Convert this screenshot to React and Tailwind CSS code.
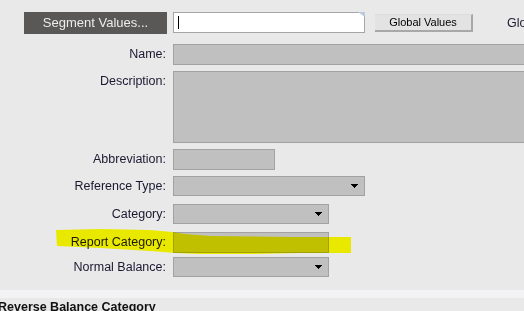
import React from "react";

function Arrow() {
  return (
    <svg width="7" height="4" viewBox="0 0 7 4" className="block">
      <rect x="0" y="0" width="7" height="1" fill="#000" />
      <rect x="1" y="1" width="5" height="1" fill="#000" />
      <rect x="2" y="2" width="3" height="1" fill="#000" />
      <rect x="3" y="3" width="1" height="1" fill="#000" />
    </svg>
  );
}

function Row({ label, mt, children, top }) {
  return (
    <div className={`flex ${top ? "items-start" : "items-center"} ${mt}`}>
      <div
        className={`w-[166px] shrink-0 text-right text-[12.5px] leading-[15px] text-[#1a1830] ${
          top ? "pt-[3px]" : ""
        }`}
      >
        {label}
      </div>
      <div className="ml-[7px] shrink-0">{children}</div>
    </div>
  );
}

function Field({ w, h, arrow }) {
  return (
    <div
      className={`${w} ${h} shrink-0 bg-[#c0c0c0] border border-[#a2a2a2] flex items-center justify-end pr-[6px]`}
    >
      {arrow ? <Arrow /> : null}
    </div>
  );
}

export default function App() {
  return (
    <div
      className="relative w-[524px] h-[311px] overflow-hidden bg-[#e9e9e9]"
      style={{ fontFamily: '"Liberation Sans", Arial, sans-serif' }}
    >
      {/* top row */}
      <div className="flex items-start pt-[12px]">
        <div className="shrink-0 ml-[24px] w-[143px] h-[22px] bg-[#5a5856] text-[#ececec] text-[13px] flex items-center justify-center">
          Segment Values...
        </div>
        <div className="relative shrink-0 ml-[6px] w-[192px] h-[21px] bg-white border border-[#a6a6a6]">
          <div className="absolute left-[4px] top-[3px] w-px h-[13px] bg-black" />
          <svg
            width="7"
            height="5"
            viewBox="0 0 7 5"
            className="absolute right-[-1px] top-[-1px]"
          >
            <polygon points="0,0 7,0 7,5" fill="#b9c9de" />
          </svg>
        </div>
        <div className="shrink-0 mt-[2px] ml-[10px] w-[98px] h-[18px] bg-[#e3e3e3] border-t border-t-[#dcdcdc] border-r-2 border-r-[#a8a8a8] border-b-2 border-b-[#a8a8a8] text-[11px] text-black flex items-center justify-center">
          Global Values
        </div>
        <div className="shrink-0 ml-[34px] mt-[4px] text-[12.5px] leading-[15px] text-[#1a1830] whitespace-nowrap">
          Global
        </div>
      </div>

      <Row label="Name:" mt="mt-[10px]">
        <Field w="w-[360px]" h="h-[21px]" />
      </Row>
      <Row label="Description:" mt="mt-[6px]" top>
        <Field w="w-[360px]" h="h-[72px]" />
      </Row>
      <Row label="Abbreviation:" mt="mt-[6px]">
        <Field w="w-[102px]" h="h-[21px]" />
      </Row>
      <Row label="Reference Type:" mt="mt-[6px]">
        <Field w="w-[192px]" h="h-[20px]" arrow />
      </Row>
      <Row label="Category:" mt="mt-[8px]">
        <Field w="w-[156px]" h="h-[20px]" arrow />
      </Row>
      <Row label="Report Category:" mt="mt-[8px]">
        <Field w="w-[156px]" h="h-[21px]" />
      </Row>
      <Row label="Normal Balance:" mt="mt-[4px]">
        <Field w="w-[156px]" h="h-[20px]" arrow />
      </Row>

      <div className="mt-[13px] h-[8px] bg-[#f3f3f5]" />
      <div className="ml-[-2px] mt-[2px] text-[12.5px] leading-[15px] font-bold text-[#111] whitespace-nowrap">
        Reverse Balance Category
      </div>

      {/* yellow highlighter */}
      <svg
        width="524"
        height="311"
        viewBox="0 0 524 311"
        className="absolute left-0 top-0 pointer-events-none mix-blend-multiply"
      >
        <polygon
          points="56,230 100,229 150,230 172,232 185,234 210,236 290,237 351,237 351,253 300,253 250,254 200,254 175,253 150,251 100,248 57,246"
          fill="#ffff00"
        />
      </svg>
    </div>
  );
}
